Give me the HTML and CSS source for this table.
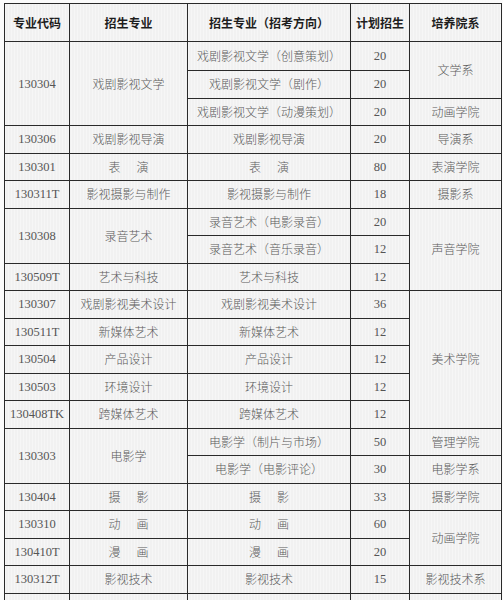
FILE: index.html
```html
<!DOCTYPE html>
<html lang="zh-CN">
<head>
<meta charset="utf-8">
<title>招生专业</title>
<link rel="stylesheet" href="styles.css">
</head>
<body>
<table class="plan">
  <colgroup>
    <col class="c-code"><col class="c-major"><col class="c-dir"><col class="c-num"><col class="c-dept">
  </colgroup>
  <thead>
    <tr class="head">
      <th>专业代码</th><th>招生专业</th><th>招生专业（招考方向）</th><th>计划招生</th><th>培养院系</th>
    </tr>
  </thead>
  <tbody>
    <tr class="first">
      <td class="num" rowspan="3">130304</td><td rowspan="3">戏剧影视文学</td><td>戏剧影视文学（创意策划）</td><td class="num">20</td><td rowspan="2">文学系</td>
    </tr>
    <tr><td>戏剧影视文学（剧作）</td><td class="num">20</td></tr>
    <tr><td>戏剧影视文学（动漫策划）</td><td class="num">20</td><td>动画学院</td></tr>
    <tr><td class="num">130306</td><td>戏剧影视导演</td><td>戏剧影视导演</td><td class="num">20</td><td>导演系</td></tr>
    <tr><td class="num">130301</td><td><span class="wide">表演</span></td><td><span class="wide">表演</span></td><td class="num">80</td><td>表演学院</td></tr>
    <tr><td class="num">130311T</td><td>影视摄影与制作</td><td>影视摄影与制作</td><td class="num">18</td><td>摄影系</td></tr>
    <tr><td class="num" rowspan="2">130308</td><td rowspan="2">录音艺术</td><td>录音艺术（电影录音）</td><td class="num">20</td><td rowspan="3">声音学院</td></tr>
    <tr><td>录音艺术（音乐录音）</td><td class="num">12</td></tr>
    <tr><td class="num">130509T</td><td>艺术与科技</td><td>艺术与科技</td><td class="num">12</td></tr>
    <tr><td class="num">130307</td><td>戏剧影视美术设计</td><td>戏剧影视美术设计</td><td class="num">36</td><td rowspan="5">美术学院</td></tr>
    <tr><td class="num">130511T</td><td>新媒体艺术</td><td>新媒体艺术</td><td class="num">12</td></tr>
    <tr><td class="num">130504</td><td>产品设计</td><td>产品设计</td><td class="num">12</td></tr>
    <tr><td class="num">130503</td><td>环境设计</td><td>环境设计</td><td class="num">12</td></tr>
    <tr><td class="num">130408TK</td><td>跨媒体艺术</td><td>跨媒体艺术</td><td class="num">12</td></tr>
    <tr><td class="num" rowspan="2">130303</td><td rowspan="2">电影学</td><td>电影学（制片与市场）</td><td class="num">50</td><td>管理学院</td></tr>
    <tr><td>电影学（电影评论）</td><td class="num">30</td><td>电影学系</td></tr>
    <tr><td class="num">130404</td><td><span class="wide">摄影</span></td><td><span class="wide">摄影</span></td><td class="num">33</td><td>摄影学院</td></tr>
    <tr><td class="num">130310</td><td><span class="wide">动画</span></td><td><span class="wide">动画</span></td><td class="num">60</td><td rowspan="2">动画学院</td></tr>
    <tr><td class="num">130410T</td><td><span class="wide">漫画</span></td><td><span class="wide">漫画</span></td><td class="num">20</td></tr>
    <tr><td class="num">130312T</td><td>影视技术</td><td>影视技术</td><td class="num">15</td><td>影视技术系</td></tr>
    <tr class="cut"><td></td><td></td><td></td><td></td><td></td></tr>
  </tbody>
</table>
</body>
</html>
```
FILE: styles.css
```css
html, body {
  margin: 0;
  height: 600px;
  overflow: hidden;
}
body {
  background: #fbfbfb;
  padding: 3px 0 0 4px;
  box-sizing: border-box;
}
.plan {
  border-collapse: collapse;
  table-layout: fixed;
  width: 498px;
  background: repeating-linear-gradient(90deg, #f6f6f6 0, #f6f6f6 2px, #ebebeb 2px, #ebebeb 3px);
  font-family: "Noto Sans CJK SC", "Noto Sans", sans-serif;
  font-size: 12px;
  color: #5a5a5a;
}
.c-code { width: 65px; }
.c-major { width: 118px; }
.c-dir { width: 163px; }
.c-num { width: 59px; }
.c-dept { width: 92px; }
.plan th, .plan td {
  border: 1px solid #2a2a2a;
  padding: 0;
  text-align: center;
  vertical-align: middle;
  white-space: nowrap;
  line-height: 14px;
}
.plan th {
  font-weight: 700;
  color: #1e1e1e;
}
.plan td {
  font-weight: 300;
}
.head th { height: 37px; }
.plan tbody td { height: 26.5px; }
.plan tbody tr.first td { height: 28px; }
.plan tbody tr.cut td { height: 30px; }
.plan td.num {
  font-family: "Liberation Serif", "Times New Roman", serif;
  font-size: 12.5px;
  font-weight: 400;
  color: #555;
}
.wide {
  letter-spacing: 16px;
  margin-right: -16px;
}
```
